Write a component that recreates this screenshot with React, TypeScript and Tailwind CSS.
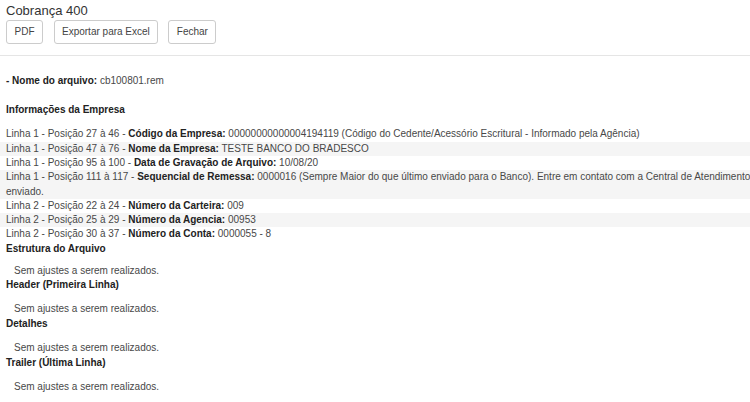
const linhas = [
  { pos: 'Linha 1 - Posição 27 à 46 - ', label: 'Código da Empresa:', value: ' 00000000000004194119 (Código do Cedente/Acessório Escritural - Informado pela Agência)' },
  { pos: 'Linha 1 - Posição 47 à 76 - ', label: 'Nome da Empresa:', value: ' TESTE BANCO DO BRADESCO' },
  { pos: 'Linha 1 - Posição 95 à 100 - ', label: 'Data de Gravação de Arquivo:', value: ' 10/08/20' },
  {
    pos: 'Linha 1 - Posição 111 à 117 - ',
    label: 'Sequencial de Remessa:',
    value: ' 0000016 (Sempre Maior do que último enviado para o Banco). Entre em contato com a Central de Atendimento ca',
    extra: 'enviado.',
  },
  { pos: 'Linha 2 - Posição 22 à 24 - ', label: 'Número da Carteira:', value: ' 009' },
  { pos: 'Linha 2 - Posição 25 à 29 - ', label: 'Número da Agencia:', value: ' 00953' },
  { pos: 'Linha 2 - Posição 30 à 37 - ', label: 'Número da Conta:', value: ' 0000055 - 8' },
]

const secoes = ['Estrutura do Arquivo', 'Header (Primeira Linha)', 'Detalhes', 'Trailer (Última Linha)']

export default function App() {
  return (
    <div
      className="w-[750px] h-[402px] overflow-hidden bg-white text-[#484848] text-[10px] leading-[14.3px]"
      style={{ fontFamily: '"Liberation Sans", Arial, sans-serif' }}
    >
      {/* topo */}
      <div className="px-[6px] pt-[2px] pb-[11px] border-b border-[#e5e5e5]">
        <div className="text-[13px] leading-[18px] text-[#333]">Cobrança 400</div>
        <div className="flex items-center">
          {['PDF', 'Exportar para Excel', 'Fechar'].map((b, i) => (
            <button
              key={b}
              className={
                'h-[24px] px-[7.5px] bg-white border border-[#ccc] rounded-[3px] text-[10px] text-[#444] ' +
                (i === 1 ? 'ml-[10.5px]' : i === 2 ? 'ml-[10px]' : '')
              }
            >
              {b}
            </button>
          ))}
        </div>
      </div>

      <div className="pt-[18px]">
        <div className="px-[6px]">
          <b className="text-[#222]">- Nome do arquivo:</b> cb100801.rem
        </div>
        <div className="px-[6px] mt-[14.3px] font-bold text-[#222]">Informações da Empresa</div>

        <div className="mt-[10.5px]">
          {linhas.map((l, i) => (
            <div key={i} className={'px-[6px] overflow-hidden ' + (i % 2 === 1 ? 'bg-[#f5f5f5]' : '')}>
              <div className="whitespace-nowrap">
                {l.pos}
                <b className="text-[#222]">{l.label}</b>
                {l.value}
              </div>
              {l.extra && <div>{l.extra}</div>}
            </div>
          ))}
        </div>

        {secoes.map((s, i) => (
          <div key={s} className={'px-[6px] ' + (i === 0 ? '' : 'pb-[0.7px]')}>
            <div className="font-bold text-[#222]">{s}</div>
            <div className={'pl-[8px] ' + (i === 0 ? 'mt-[7.7px]' : 'mt-[9.7px]')}>Sem ajustes a serem realizados.</div>
          </div>
        ))}

        <div className="flex justify-end mt-[8px]">
          <div className="w-[38px] h-[6px] border-t-2 border-[#ccc]" />
        </div>
      </div>
    </div>
  )
}
